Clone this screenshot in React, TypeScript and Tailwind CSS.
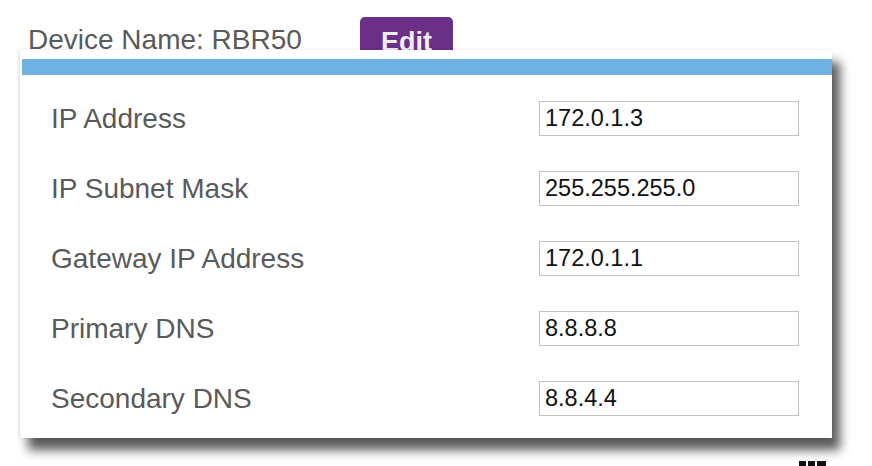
const fields = [
  { label: 'IP Address', value: '172.0.1.3' },
  { label: 'IP Subnet Mask', value: '255.255.255.0' },
  { label: 'Gateway IP Address', value: '172.0.1.1' },
  { label: 'Primary DNS', value: '8.8.8.8' },
  { label: 'Secondary DNS', value: '8.8.4.4' },
];

export default function App() {
  return (
    <div
      className="w-[872px] h-[466px] overflow-hidden bg-white"
      style={{ fontFamily: '"Liberation Sans", Arial, sans-serif' }}
    >
      {/* header */}
      <div className="flex h-[50px] items-start">
        <div className="ml-[28px] mt-[26px] text-[28px] leading-[28px] text-[#5a5a5a] whitespace-nowrap">
          Device Name: RBR50
        </div>
        <button className="ml-[58px] mt-[17px] w-[93px] h-[44px] shrink-0 rounded-[5px] bg-[#6a2f86] pt-[6px] text-center align-top text-[27px] leading-[27px] font-bold text-[#f0eef2]">
          <span className="block">Edit</span>
        </button>
      </div>

      {/* settings panel */}
      <div className="relative z-10 ml-[20px] w-[812px] h-[388px] bg-white pt-[9px] pl-[2px] shadow-[8px_12px_10px_rgba(0,0,0,0.65),-1px_0_3px_rgba(0,0,0,0.12)]">
        <div className="h-[16px] bg-[#6db2e2]" />
        <div className="flex flex-col gap-[35px] pt-[26px]">
          {fields.map((f) => (
            <div key={f.label} className="flex h-[35px] items-center">
              <div className="w-[517px] pl-[29px] text-[28px] leading-[28px] text-[#5a5a5a] whitespace-nowrap">
                {f.label}
              </div>
              <div className="flex h-[35px] w-[260px] items-center border border-[#c2c2c2] bg-white pl-[5px] text-[23.5px] leading-[23px] text-[#111]">
                {f.value}
              </div>
            </div>
          ))}
        </div>
      </div>

      {/* cut-off content below */}
      <div className="mt-[23px] ml-[799px] flex gap-[2px]">
        <div className="h-[5px] w-[7px] bg-[#111]" />
        <div className="h-[5px] w-[7px] bg-[#111]" />
        <div className="h-[5px] w-[9px] bg-[#111]" />
      </div>
    </div>
  );
}
